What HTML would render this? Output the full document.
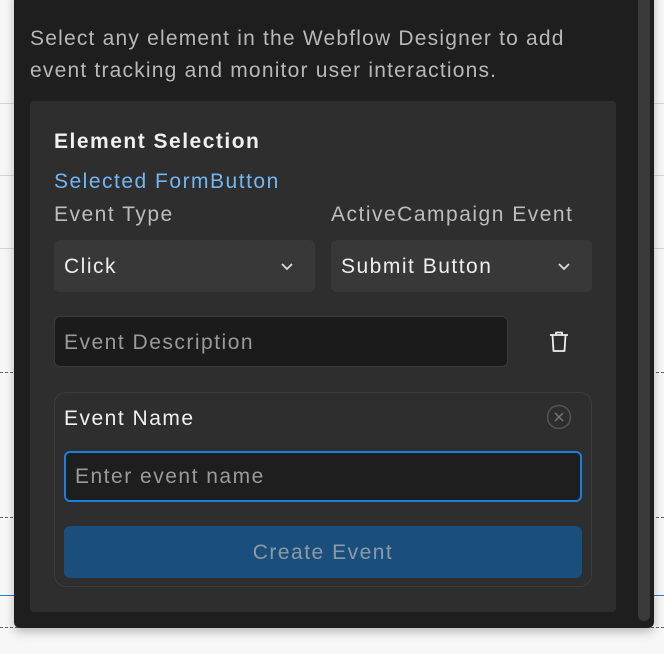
<!DOCTYPE html>
<html><head><style>
*{margin:0;padding:0;box-sizing:border-box}
body{width:664px;height:654px;background:#f7f7f7;position:relative;overflow:hidden;font-family:"Liberation Sans",sans-serif}
.a{position:absolute}
.t{font-size:21px;letter-spacing:1.5px;white-space:nowrap}
.hl{position:absolute;left:0;width:664px;height:1px;background:#d8d8d8}
.dl{position:absolute;left:0;width:664px;height:0;border-top:1px dashed #666}
</style></head><body>
<div class="hl" style="top:103px"></div>
<div class="hl" style="top:175px"></div>
<div class="hl" style="top:248px"></div>
<div class="dl" style="top:372px"></div>
<div class="dl" style="top:517px"></div>
<div class="a" style="top:595px;left:0;width:664px;height:1px;background:#1a7fe0"></div>
<div class="dl" style="top:627px"></div>
<div class="a" style="left:14px;top:-10px;width:640px;height:638px;background:#1e1e1e;border-radius:0 0 6px 6px;box-shadow:0 4px 10px rgba(0,0,0,.25)"></div>
<div class="a" style="left:638px;top:0;width:12px;height:621px;background:#3a3a3a;border-radius:0 0 6px 6px"></div>
<div class="a" style="left:30px;top:23px;width:620px;font-size:21px;letter-spacing:1.2px;line-height:32px;color:#b8b8b8;white-space:nowrap">Select any element in the Webflow Designer to add<br>event tracking and monitor user interactions.</div>
<div class="a" style="left:30px;top:101px;width:586px;height:511px;background:#2e2e2e;border-radius:3px"></div>
<div class="a t" style="left:54px;top:130px;font-weight:bold;color:#f0f0f0">Element Selection</div>
<div class="a t" style="left:54px;top:170px;color:#73b6f5">Selected FormButton</div>
<div class="a t" style="left:54px;top:203px;color:#bdbdbd">Event Type</div>
<div class="a t" style="left:331px;top:203px;color:#bdbdbd">ActiveCampaign Event</div>
<div class="a" style="left:54px;top:240px;width:261px;height:52px;background:#383838;border-radius:6px"></div>
<div class="a t" style="left:64px;top:255px;color:#eee">Click</div>
<svg class="a" style="left:280px;top:261px" width="14" height="10"><path d="M2 3l5 5 5-5" stroke="#ddd" stroke-width="1.8" fill="none"/></svg>
<div class="a" style="left:331px;top:240px;width:261px;height:52px;background:#383838;border-radius:6px"></div>
<div class="a t" style="left:341px;top:255px;color:#eee">Submit Button</div>
<svg class="a" style="left:557px;top:261px" width="14" height="10"><path d="M2 3l5 5 5-5" stroke="#ddd" stroke-width="1.8" fill="none"/></svg>
<div class="a" style="left:54px;top:316px;width:454px;height:51px;background:#1b1b1b;border:1px solid #3a3a3a;border-radius:6px"></div>
<div class="a t" style="left:64px;top:331px;color:#9a9a9a">Event Description</div>
<svg class="a" style="left:548px;top:330px" width="22" height="24" viewBox="0 0 22 24"><path d="M2 5h18M8 5V2.5h6V5M4.5 5l1 16h11l1-16" stroke="#eee" stroke-width="1.8" fill="none" stroke-linejoin="round"/></svg>
<div class="a" style="left:54px;top:392px;width:538px;height:195px;border:1px solid #3d3d3d;border-radius:12px"></div>
<div class="a t" style="left:64px;top:407px;color:#f0f0f0">Event Name</div>
<svg class="a" style="left:546px;top:404px" width="26" height="26"><circle cx="13" cy="13" r="11.5" stroke="#555" stroke-width="1.5" fill="none"/><path d="M9 9l8 8M17 9l-8 8" stroke="#777" stroke-width="1.5"/></svg>
<div class="a" style="left:64px;top:451px;width:518px;height:51px;background:#1e1e1e;border:2px solid #1a7fe0;border-radius:6px"></div>
<div class="a t" style="left:75px;top:465px;color:#9a9a9a">Enter event name</div>
<div class="a t" style="left:64px;top:526px;width:518px;height:52px;background:#1a4f7d;border-radius:6px;text-align:center;line-height:54px;color:#8c9aa6">Create Event</div>
</body></html>
